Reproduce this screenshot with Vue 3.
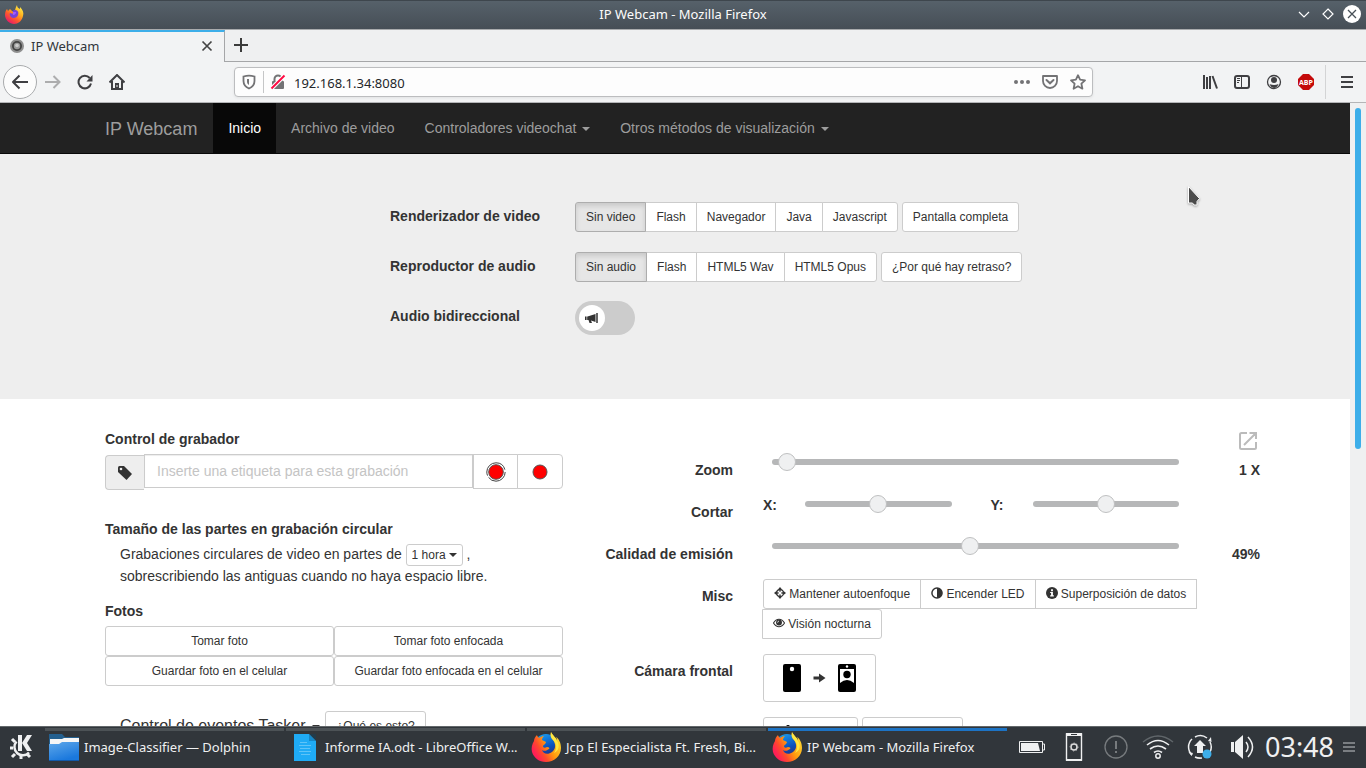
<script setup>
import { ref } from 'vue'

const address = ref('192.168.1.34:8080')
const tag = ref('')
const part = ref('1 hora')
const twoWay = ref(false)
const zoom = ref(15)
const cropX = ref(50)
const cropY = ref(50)
const quality = ref(49)

const video = ['Sin video', 'Flash', 'Navegador', 'Java', 'Javascript']
const audio = ['Sin audio', 'Flash', 'HTML5 Wav', 'HTML5 Opus']
const photos = ['Tomar foto', 'Tomar foto enfocada', 'Guardar foto en el celular', 'Guardar foto enfocada en el celular']
const tasks = [
  { icon: 'folder', title: 'Image-Classifier — Dolphin' },
  { icon: 'doc', title: 'Informe IA.odt - LibreOffice W...' },
  { icon: 'fox', title: 'Jcp El Especialista Ft. Fresh, Bi...' },
  { icon: 'fox', title: 'IP Webcam - Mozilla Firefox', active: true },
]
</script>

<template>
  <div class="desktop">
    <svg class="defs" width="0" height="0" aria-hidden="true">
      <defs>
        <linearGradient id="fxBody" x1="0.85" y1="0.05" x2="0.2" y2="0.95">
          <stop offset="0" stop-color="#fff14d" /><stop offset="0.35" stop-color="#ffb01f" /><stop offset="0.65" stop-color="#ff5a2c" /><stop offset="1" stop-color="#e8156d" />
        </linearGradient>
        <linearGradient id="fxOld" x1="0.9" y1="0.2" x2="0.1" y2="0.7">
          <stop offset="0" stop-color="#ffd52e" /><stop offset="0.45" stop-color="#ff9a0e" /><stop offset="0.75" stop-color="#ff4a2c" /><stop offset="1" stop-color="#ff1f56" />
        </linearGradient>
        <linearGradient id="fxGlobe" x1="0.2" y1="0" x2="0.6" y2="1">
          <stop offset="0" stop-color="#1aa0f2" /><stop offset="0.6" stop-color="#0b50bd" /><stop offset="1" stop-color="#2b2b78" />
        </linearGradient>
        <linearGradient id="folderBlue" x1="0" y1="0" x2="0.5" y2="1">
          <stop offset="0" stop-color="#5fa8ea" /><stop offset="1" stop-color="#1a78dd" />
        </linearGradient>
        <symbol id="folder" viewBox="0 0 32 32">
          <path d="M1 3h13l3 3h14v8H1z" fill="#24608f" />
          <path d="M2 8h12l2-1h15v9H2z" fill="#f6f6f6" />
          <path d="M1 13h10l3-2h17v18H1z" fill="url(#folderBlue)" />
          <path d="M1 29h30v1H1z" fill="#1259a9" />
        </symbol>
        <symbol id="doc" viewBox="0 0 32 32">
          <path d="M5 3h15l7 7v20H5z" fill="#1fabf5" />
          <path d="M20 3l7 7v-7z" fill="#233b4a" /><path d="M20 3v7h7z" fill="#1587c7" />
          <path d="M11 11.500h7M10 14.500h12M11 17.500h10M10 20.500h12M12 23.500h9" stroke="#5fc4f8" />
        </symbol>
        <symbol id="fox" viewBox="0 0 32 32">
          <circle cx="16" cy="15" r="12" fill="url(#fxGlobe)" />
          <path d="M21 1c-1 4 0 6 2 8 3 4 3 9-1 12-4 3-9 2-10-2 3 2 5 0 7-1 1-1 0-2-2-2-2 1-4 1-4-1 0-1 3-2 3-4-1-1-3-1-4-2 0-2 1-3 2-4-2 0-4 1-5 2-1-1-2-2-2-3-2 2-3 4-3 6-2 3-3 7-2 11 2 6 7 10 14 10 8 0 15-6 15-14 0-5-2-9-5-11 1 2 1 3 1 4-1-4-5-6-6-9z" fill="url(#fxOld)" />
          <path d="M21 1c-1 4 0 6 2 8 4 4 4 9 1 13 5-2 6-8 3-12-1-4-5-6-6-9z" fill="#fff04a" opacity=".8" />
        </symbol>
      </defs>
    </svg>

    <header class="titlebar">
      <svg class="app-icon" width="20" height="20" viewBox="0 0 20 20">
        <path d="M13 1c0 2 1 3 3 4 0-1 0-1 0-2 3 3 4 6 3 9-1 5-5 8-9 8s-9-4-9-9c0-3 1-5 2-6l1 2 2-2 2 2h3c0-2 1-4 2-6z" fill="url(#fxBody)" />
        <path d="M10 6c4 0 5 2 4 5-1 3-5 4-7 2-1-1-2-3-1-4l4 1 1-2H8z" fill="#7641d9" />
        <path d="M9 8h3c0 2-1 3-3 3z" fill="#a35cff" />
      </svg>
      <span>IP Webcam - Mozilla Firefox</span>
      <div class="win-buttons">
        <button aria-label="Minimizar"><svg width="20" height="20" viewBox="0 0 20 20"><path d="M5 8l5 5 5-5" fill="none" stroke="#fff" stroke-width="1.200" /></svg></button>
        <button aria-label="Maximizar"><svg width="20" height="20" viewBox="0 0 20 20"><path d="M10 5l5 5-5 5-5-5z" fill="none" stroke="#fff" stroke-width="1.200" /></svg></button>
        <button aria-label="Cerrar"><svg width="20" height="20" viewBox="0 0 20 20"><circle cx="10" cy="10" r="9" fill="#fff" /><path d="M6 6l8 8M14 6l-8 8" stroke="#475057" stroke-width="1.300" /></svg></button>
      </div>
    </header>

    <div class="tabs">
      <div class="tab">
        <svg width="16" height="16" viewBox="0 0 16 16"><circle cx="8" cy="8" r="7" fill="#8f8f8f" /><circle cx="8" cy="8" r="5" fill="#444" /><circle cx="8" cy="8" r="3.200" fill="#999" /><circle cx="8" cy="7.500" r="1.800" fill="#ccc" /></svg>
        <span>IP Webcam</span>
        <button aria-label="Cerrar pestaña"><svg width="16" height="16" viewBox="0 0 16 16"><path d="M3.500 3.500l9 9M12.500 3.500l-9 9" stroke="#444" stroke-width="1.700" /></svg></button>
      </div>
      <button class="newtab" aria-label="Nueva pestaña"><svg width="16" height="16" viewBox="0 0 16 16"><path d="M8 1v14M1 8h14" stroke="#3b3b3b" stroke-width="2" /></svg></button>
    </div>

    <div class="toolbar">
      <button class="back" aria-label="Atrás"><svg width="18" height="18" viewBox="0 0 18 18"><path d="M17 9H2M8.500 2.500L2 9l6.500 6.500" fill="none" stroke="#3f3f42" stroke-width="2" stroke-linejoin="round" /></svg></button>
      <button aria-label="Adelante"><svg width="16" height="16" viewBox="0 0 16 16"><path d="M0 8h14M8.500 2L14.500 8l-6 6" fill="none" stroke="#adadae" stroke-width="2" /></svg></button>
      <button aria-label="Recargar"><svg width="16" height="16" viewBox="0 0 16 16"><path d="M14 9.500a6.300 6.300 0 1 1-1.300-5.500" fill="none" stroke="#3f3f42" stroke-width="2" /><path d="M15.500 1v6.500H9.500z" fill="#3f3f42" /></svg></button>
      <button aria-label="Inicio"><svg width="16" height="16" viewBox="0 0 16 16"><path d="M0.500 8.500L8 1l7.500 7.500" fill="none" stroke="#3f3f42" stroke-width="2" /><path d="M3 7v8h10V7" fill="none" stroke="#3f3f42" stroke-width="2" /><path d="M6 9h4v5H6z" fill="#3f3f42" /><path d="M7.500 11h1v2h-1z" fill="#eee" /></svg></button>
      <div class="urlbar">
        <button aria-label="Protección"><svg width="16" height="16" viewBox="0 0 16 16"><path d="M2.500 2.500Q8 .8 13.500 2.500v4.500q0 5-5.500 7.500-5.500-2.500-5.500-7.500z" fill="none" stroke="#737375" stroke-width="1.800" /><path d="M8 5v6c-1.500-1-2-2-2-3.500V5z" fill="#737375" /></svg></button>
        <i class="line"></i>
        <button aria-label="Conexión no segura"><svg width="16" height="16" viewBox="0 0 16 16"><path d="M4.500 8V5a3.500 3.500 0 0 1 7 0v3" fill="none" stroke="#737375" stroke-width="2" /><rect x="2" y="7" width="12" height="8" rx="1" fill="#737375" /><path d="M1.500 14.500l13-13" stroke="#fff" stroke-width="4" /><path d="M1.500 14.500l13-13" stroke="#ff0b43" stroke-width="2" /></svg></button>
        <input v-model="address" aria-label="Dirección">
        <button aria-label="Acciones"><svg width="16" height="16" viewBox="0 0 16 16" fill="#737375"><circle cx="2" cy="8" r="2" /><circle cx="8" cy="8" r="2" /><circle cx="14" cy="8" r="2" /></svg></button>
        <button aria-label="Pocket"><svg width="16" height="16" viewBox="0 0 16 16"><path d="M1 2h14v5a7 7 0 0 1-14 0z" fill="none" stroke="#737375" stroke-width="1.800" stroke-linejoin="round" /><path d="M4.500 6L8 9.300 11.500 6" fill="none" stroke="#737375" stroke-width="2" stroke-linecap="round" /></svg></button>
        <button aria-label="Marcador"><svg width="16" height="16" viewBox="0 0 16 16"><path d="M8 1.200l2.100 4.500 4.900.6-3.600 3.400 1 5L8 12.200 3.600 14.700l1-5L1 6.300l4.900-.6z" fill="none" stroke="#737375" stroke-width="1.800" stroke-linejoin="round" /></svg></button>
      </div>
      <div class="tools">
        <button aria-label="Biblioteca"><svg width="16" height="16" viewBox="0 0 16 16"><path d="M2 1v14M5 3v12M8 2v13M10.500 2l4.500 12.500" stroke="#3f3f42" stroke-width="2" /></svg></button>
        <button aria-label="Barra lateral"><svg width="16" height="16" viewBox="0 0 16 16"><rect x="1" y="2" width="14" height="12" rx="2" fill="none" stroke="#3f3f42" stroke-width="2" /><path d="M7.500 2v12" stroke="#3f3f42" /><path d="M3 4.500h3M3 6.500h3M3 8.500h2" stroke="#3f3f42" /></svg></button>
        <button aria-label="Cuenta"><svg width="16" height="16" viewBox="0 0 16 16"><circle cx="8" cy="8" r="6.500" fill="none" stroke="#3f3f42" stroke-width="1.300" /><circle cx="8" cy="6" r="3" fill="#3f3f42" /><path d="M3.500 10q4.500 2 9 0-1.500 4-4.500 4t-4.500-4z" fill="#3f3f42" /></svg></button>
        <button aria-label="Adblock Plus"><svg width="18" height="18" viewBox="0 0 18 18"><path d="M6 1h6l5 5v6l-5 5H6l-5-5V6z" fill="#c40a0a" /><text x="9" y="12" text-anchor="middle" class="abp">ABP</text></svg></button>
      </div>
      <i class="tool-sep"></i>
      <button aria-label="Menú"><svg width="16" height="16" viewBox="0 0 16 16"><path d="M2 3h12M2 8h12M2 13h12" stroke="#3f3f42" stroke-width="2" /></svg></button>
    </div>

    <div class="viewport">
      <main class="page">
        <nav class="navbar">
          <div class="container nav-inner">
            <a class="brand" href="#">IP Webcam</a>
            <a class="active" href="#">Inicio</a>
            <a href="#">Archivo de video</a>
            <a href="#">Controladores videochat <i class="caret"></i></a>
            <a href="#">Otros métodos de visualización <i class="caret"></i></a>
          </div>
        </nav>

        <section class="hero">
          <div class="container">
            <div class="hero-grid">
              <b id="lblVideo">Renderizador de video</b>
              <div class="buttons">
                <div class="group" role="group" aria-labelledby="lblVideo">
                  <button v-for="(v, i) in video" :key="v" class="btn" :class="{ pressed: i === 0 }">{{ v }}</button>
                </div>
                <button class="btn">Pantalla completa</button>
              </div>
              <b id="lblAudio">Reproductor de audio</b>
              <div class="buttons">
                <div class="group" role="group" aria-labelledby="lblAudio">
                  <button v-for="(v, i) in audio" :key="v" class="btn" :class="{ pressed: i === 0 }">{{ v }}</button>
                </div>
                <button class="btn">¿Por qué hay retraso?</button>
              </div>
              <label for="twoWay"><b>Audio bidireccional</b></label>
              <label class="switch">
                <input id="twoWay" v-model="twoWay" type="checkbox">
                <span class="knob"><svg width="14" height="14" viewBox="0 0 14 14"><path d="M0 5.500h2.500L10.500 3v8L6 9.500 7 12H4.500L3.500 9H0z" fill="#333" /><path d="M1.800 5v4" stroke="#fff" stroke-width=".6" /><path d="M12 2v10" stroke="#333" stroke-width="1.500" /></svg></span>
              </label>
            </div>
          </div>
        </section>

        <section class="container content">
          <div class="left">
            <label class="heading" for="tag">Control de grabador</label>
            <div class="input-group">
              <span class="addon"><svg width="16" height="16" viewBox="0 0 16 16"><path d="M1 2.500Q1 1 2.500 1H7l8 8-5.500 6L1 7z" fill="#333" /><circle cx="4" cy="4" r="1.300" fill="#eee" /></svg></span>
              <input id="tag" v-model="tag" placeholder="Inserte una etiqueta para esta grabación">
              <button class="rec" aria-label="Grabación circular"><svg width="20" height="20" viewBox="0 0 20 20"><circle cx="10" cy="10" r="9.200" fill="none" stroke="#444" stroke-dasharray="23 2 30 3" /><circle cx="10" cy="10" r="7.300" fill="red" stroke="#555" /></svg></button>
              <button class="rec" aria-label="Grabar"><svg width="20" height="20" viewBox="0 0 20 20"><circle cx="10" cy="10" r="7" fill="red" stroke="#555" /></svg></button>
            </div>
            <h4 class="heading size">Tamaño de las partes en grabación circular</h4>
            <p class="parts">
              <label for="part">Grabaciones circulares de video en partes de</label> <span class="select"><select id="part" v-model="part"><option>1 hora</option></select><i class="caret"></i></span>
              ,<br>sobrescribiendo las antiguas cuando no haya espacio libre.
            </p>
            <h4 class="heading">Fotos</h4>
            <div class="photos"><button v-for="p in photos" :key="p" class="btn">{{ p }}</button></div>
            <div class="tasker"><a href="#">Control de eventos Tasker <i class="caret"></i></a><button class="btn">¿Qué es esto?</button></div>
          </div>

          <div class="right">
            <a class="external" href="#" aria-label="Abrir en otra ventana"><svg width="20" height="20" viewBox="0 0 20 20"><path d="M9 2H3.500Q2 2 2 3.500v13Q2 18 3.500 18h13q1.500 0 1.500-1.500V11M11.500 2H18v6M6 14L17.500 2.500" fill="none" stroke="#bbb" stroke-width="2" /></svg></a>
            <label for="zoom">Zoom</label>
            <div class="slide"><input id="zoom" v-model="zoom" type="range" min="0" max="1000"></div>
            <output for="zoom">1 X</output>
            <b>Cortar</b>
            <div class="slide crop">
              <label for="cropX">X:</label><input id="cropX" v-model="cropX" type="range">
              <label for="cropY">Y:</label><input id="cropY" v-model="cropY" type="range">
            </div>
            <span></span>
            <label for="quality">Calidad de emisión</label>
            <div class="slide"><input id="quality" v-model="quality" type="range" min="1" max="100"></div>
            <output for="quality">{{ quality }}%</output>
            <b>Misc</b>
            <div class="misc">
              <button class="btn"><svg width="12" height="12" viewBox="0 0 13 13"><circle cx="6.500" cy="6.500" r="3.700" fill="none" stroke="#333" stroke-width="1.200" /><path d="M6.500 0L9 3H7.200v2.500H5.800V3H4zM6.500 13L9 10H7.200V7.500H5.800V10H4zM0 6.500L3 4v1.800h2.500v1.400H3V9zM13 6.500L10 4v1.800H7.500v1.400H10V9z" fill="#333" /><circle cx="6.500" cy="6.500" r="1.700" fill="#fff" /></svg> Mantener autoenfoque</button>
              <button class="btn"><svg width="12" height="12" viewBox="0 0 13 13"><circle cx="6.500" cy="6.500" r="5.500" fill="#fff" stroke="#333" stroke-width="1.600" /><path d="M6.500 1a5.500 5.500 0 0 1 0 11z" fill="#333" /></svg> Encender LED</button>
              <button class="btn"><svg width="12" height="12" viewBox="0 0 13 13"><circle cx="6.500" cy="6.500" r="6.500" fill="#333" /><path d="M5.500 2.500h2v2h-2zM4.500 5.500h3V9h1v1.200h-4V9h1V6.500h-1z" fill="#fff" /></svg> Superposición de datos</button>
              <button class="btn"><svg width="12" height="12" viewBox="0 0 13 13"><path d="M.5 6.500Q3 2.500 6.500 2.500t6 4Q10 10.500 6.500 10.500t-6-4z" fill="#fff" stroke="#333" stroke-width="1.200" /><circle cx="6.500" cy="6" r="3.200" fill="#333" /><path d="M5 6.200Q5 4.500 6.500 4.500" fill="none" stroke="#fff" stroke-width=".8" /></svg> Visión nocturna</button>
            </div>
            <span></span>
            <b>Cámara frontal</b>
            <div>
              <button class="btn camera" aria-label="Cambiar a cámara frontal">
                <svg width="20" height="28" viewBox="0 0 20 28"><rect x="1" y="0" width="18" height="28" rx="2" /><circle cx="10" cy="5" r="2.200" fill="#fff" /></svg>
                <svg width="13" height="12" viewBox="0 0 13 12"><path d="M.5 4.500H6V1.500L12.500 6 6 10.500v-3H.5z" fill="#333" /></svg>
                <svg width="20" height="28" viewBox="0 0 20 28"><rect x="1" y="0" width="18" height="28" rx="2" /><path d="M3 5h14v14q-7-6-14 0z" fill="#fff" /><circle cx="10" cy="10.500" r="3.700" /><circle cx="10" cy="2.500" r="1.200" fill="#fff" /></svg>
              </button>
            </div>
            <span></span>
            <b></b>
            <div class="more">
              <button class="btn" aria-label="Temporizador"><svg width="20" height="28" viewBox="0 0 20 28"><circle cx="10" cy="2" r="2" /><path d="M5 3h10v22H5z" /></svg></button>
              <button class="btn" aria-label="Más opciones"></button>
            </div>
          </div>
        </section>
      </main>
      <div class="scroll"><i></i></div>
      <svg class="cursor" width="14" height="22" viewBox="0 0 14 22"><path d="M1.500 1.500v16.500h4l1.500 2h3v-3.500l2.500-3z" fill="#4b4b4b" stroke="#fff" /></svg>
    </div>

    <footer class="taskbar">
      <button class="kicker" aria-label="Menú de aplicaciones"><svg width="26" height="26" viewBox="0 0 26 26">
        <path d="M8.500 7.500a8 8 0 1 0 12.500 11" fill="none" stroke="#eff0f1" stroke-width="2.500" />
        <path d="M5 14H2M7 20l-3 3M13 22v3M19 20l3 3M7 8L4 5" stroke="#eff0f1" stroke-width="3" />
        <path d="M10 1h4v16h-4zM19 1h5l-5 8 5 8h-5l-5-8z" fill="#eff0f1" />
      </svg></button>
      <div class="tasks">
        <button v-for="t in tasks" :key="t.title" class="task" :class="{ current: t.active }"><svg width="32" height="32"><use :href="'#' + t.icon" /></svg><span>{{ t.title }}</span></button>
      </div>
      <div class="tray">
        <button aria-label="Batería"><svg width="28" height="28" viewBox="0 0 28 28"><path d="M1.500 8.500h23v11h-23zM25 11h1.500v6h-2" fill="none" stroke="#eff0f1" /><path d="M3 10h17l2 8H3z" fill="#eff0f1" /></svg></button>
        <button aria-label="Teléfono"><svg width="28" height="28" viewBox="0 0 28 28"><path d="M6.500 1h15v26h-15z" fill="none" stroke="#eff0f1" stroke-width="1.400" /><path d="M6 0h16v3H6zM6 26h16v2H6z" fill="#eff0f1" /><path d="M11 1.500h6" stroke="#31363b" /><circle cx="14" cy="14" r="3" fill="none" stroke="#ddd" stroke-width="1.500" /><circle cx="14" cy="14" r="4" fill="none" stroke="#ccc" stroke-dasharray="1 2" /></svg></button>
        <button aria-label="Notificaciones"><svg width="28" height="28" viewBox="0 0 28 28"><circle cx="14" cy="14" r="11" fill="none" stroke="#777b7e" stroke-width="1.300" /><path d="M14 8v8M14 18v2" stroke="#777b7e" stroke-width="2" /></svg></button>
        <button aria-label="Red inalámbrica"><svg width="32" height="28" viewBox="0 0 32 28" fill="none"><path d="M1 9Q16-3 31 9" stroke="#60666a" stroke-width="1.500" /><path d="M5 12q11-9 22 0M8 16q8-6 16 0M12 19.500q4-3 8 0" stroke="#eff0f1" stroke-width="1.600" /><circle cx="16" cy="23" r="2.200" stroke="#eff0f1" stroke-width="1.500" /></svg></button>
        <button aria-label="Actualizaciones"><svg width="28" height="28" viewBox="0 0 28 28"><path d="M6 22a11 11 0 0 1 0-16M9 4a11 11 0 0 1 12 1M24 9a11 11 0 0 1 0 10M9 24q3 1.500 7 1" fill="none" stroke="#eff0f1" stroke-width="1.500" /><path d="M14 7l6 6h-3v7h-6v-7H8zM22 8l3-4 .5 5zM2.500 19l3 4 1.500-3z" fill="#eff0f1" /><circle cx="21" cy="21" r="4.500" fill="#3daee9" /></svg></button>
        <button aria-label="Volumen"><svg width="28" height="28" viewBox="0 0 28 28"><path d="M3 9h3v10H3zM7 9l8-7v24l-8-7z" fill="#eff0f1" /><path d="M18 9q4 5 0 10M20 4q9 10 0 20" fill="none" stroke="#eff0f1" stroke-width="1.500" /></svg></button>
      </div>
      <time>03:48</time>
      <button class="panel-menu" aria-label="Opciones del panel"><svg width="12" height="12" viewBox="0 0 12 12"><path d="M0 2h12M0 6h12M0 10h12" stroke="#92979b" stroke-width="1.500" /></svg></button>
    </footer>
  </div>
</template>

<style>
body { margin: 0; background: #fff; }
</style>

<style scoped>
* { box-sizing: border-box; }
button, input, select { font: inherit; color: inherit; }
button { padding: 0; border: 0; background: none; cursor: pointer; }
svg { flex: none; }
.defs { position: absolute; }
.desktop { display: flex; flex-direction: column; height: 100vh; overflow: hidden; font: 13px/20px "Noto Sans", sans-serif; color: #31363b; }

.titlebar { position: relative; flex: none; display: flex; align-items: center; justify-content: center; height: 29px; padding-bottom: 2px; color: #fcfcfc; background: linear-gradient(#56616a, #464e56); border-top: 1px solid #3e464d; }
.app-icon { position: absolute; left: 4px; top: 3px; }
.win-buttons { position: absolute; right: 4px; top: 3px; display: flex; gap: 4px; }
.win-buttons button { display: flex; }

.tabs { flex: none; display: flex; height: 33px; background: #eff0f1; border-top: 1px solid #a9abad; }
.tab { display: flex; align-items: center; gap: 6px; width: 225px; padding: 0 9px 2px; border-top: 2px solid #3daee9; border-right: 1px solid #a5a6a8; background: #f2f3f4; }
.tab span { flex: 1; }
.tab button { display: flex; }
.newtab { flex: 1; display: flex; align-items: center; padding: 0 0 2px 8px; border-bottom: 1px solid #a5a6a8; }

.toolbar { flex: none; display: flex; align-items: center; height: 41px; padding: 0 3px; background: #f2f3f4; border-bottom: 1px solid #b4b5b7; }
.toolbar button { display: flex; align-items: center; justify-content: center; width: 32px; height: 32px; }
.toolbar .back { width: 34px; height: 34px; border: 1px solid #a9abad; border-radius: 50%; background: #fcfcfc; }
.urlbar { flex: 1; display: flex; align-items: center; height: 30px; margin: 0 101px; border: 1px solid #bcbdbf; border-radius: 4px; background: #fdfdfd; box-shadow: 0 1px 3px #0001; }
.urlbar button { width: 28px; height: 28px; }
.urlbar .line { width: 1px; height: 22px; background: #c5c6c7; }
.urlbar input { flex: 1; min-width: 0; padding: 2px 2px 0; border: 0; outline: 0; background: none; color: #232629; }
.tools { display: flex; }
.abp { font: bold 7px "Open Sans", sans-serif; fill: #fff; }
.tool-sep { width: 1px; height: 34px; margin: 0 5px 0 3px; background: #d3d4d5; }

.viewport { position: relative; flex: 1; display: flex; min-height: 0; font: 14px/20px "Liberation Sans", Arial, sans-serif; color: #333; }
.page { flex: 1; min-width: 0; overflow: hidden; background: #fff; }
.scroll { width: 16px; padding: 5px; background: #eff0f1; }
.scroll i { display: block; width: 6px; height: 341px; border-radius: 3px; background: #3daee9; }
.cursor { position: absolute; left: 1187px; top: 82px; filter: drop-shadow(0 1px 1px #0005); }
.container { max-width: 1170px; margin: 0 auto; padding: 0 0 0 15px; }
.navbar { background: #222; border-bottom: 1px solid #080808; }
.nav-inner { display: flex; }
.navbar a { padding: 15px; color: #9d9d9d; text-decoration: none; }
.navbar .brand { padding: 16px 16px 14px 0; font-size: 18px; }
.navbar .active { color: #fff; background: #080808; }
.caret { display: inline-block; margin-left: 2px; vertical-align: middle; border: 4px solid transparent; border-top-color: currentColor; border-bottom: 0; }

.hero { padding: 48px 0 64px; background: #eee; }
.hero-grid { display: grid; grid-template-columns: 185px 1fr; row-gap: 20px; margin-left: 285px; }
.hero-grid > b, .hero-grid > label:not(.switch) { padding-top: 4px; }
.buttons { display: flex; gap: 4px; }
.group { display: flex; }
.btn { height: 30px; padding: 0 10px; border: 1px solid #ccc; border-radius: 3px; background: #fff; font-size: 12px; font-weight: normal; line-height: 18px; white-space: nowrap; color: #333; }
.group .btn + .btn { margin-left: -1px; }
.group .btn:not(:first-child) { border-top-left-radius: 0; border-bottom-left-radius: 0; }
.group .btn:not(:last-child) { border-top-right-radius: 0; border-bottom-right-radius: 0; }
.btn.pressed { position: relative; background: #e6e6e6; border-color: #adadad; box-shadow: inset 0 3px 5px #00000020; }
.switch { display: block; position: relative; width: 60px; height: 34px; margin-top: -1px; border-radius: 17px; background: #ccc; }
.switch input { position: absolute; opacity: 0; }
.knob { position: absolute; left: 4px; top: 4px; display: flex; align-items: center; justify-content: center; width: 26px; height: 26px; border-radius: 50%; background: #fff; }

.content { display: grid; grid-template-columns: 458fr 697fr; padding-top: 30px; }
.heading { display: block; margin: 0 0 5px; font-size: 14px; font-weight: bold; }
.input-group { display: flex; align-items: flex-start; }
.addon { display: flex; align-items: center; justify-content: center; width: 39px; height: 35px; margin-top: 1px; border: 1px solid #ccc; border-right: 0; border-radius: 4px 0 0 4px; background: #eee; }
.input-group input { flex: 1; min-width: 0; height: 34px; padding: 6px 12px; border: 1px solid #ccc; border-radius: 0; box-shadow: inset 0 1px 1px #00000013; }
.input-group input::placeholder { color: #c4c4c4; }
.rec { display: flex; align-items: center; justify-content: center; width: 45px; height: 35px; border: 1px solid #ccc; background: #fff; }
.rec + .rec { width: 46px; margin-left: -1px; border-radius: 0 4px 4px 0; }
.size { margin: 29px 0 4px; }
.parts { margin: 0 0 14px; padding-left: 15px; line-height: 22px; }
.select { position: relative; display: inline-flex; align-items: center; height: 22px; margin: 1px 0 -1px; vertical-align: top; }
.select select { appearance: none; width: 57px; height: 22px; padding: 0 5px; border: 1px solid #ccc; border-radius: 3px; background: #fff; font-size: 12px; line-height: 18px; }
.select .caret { position: absolute; right: 6px; pointer-events: none; }
.photos { display: grid; grid-template-columns: 1fr 1fr; }
.tasker { display: flex; gap: 5px; margin-top: 25px; padding-left: 15px; font-size: 16px; line-height: 30px; }
.tasker a { color: #333; text-decoration: none; }

.right { position: relative; display: grid; grid-template-columns: 170px 1fr 60px; grid-template-rows: 42px 42px 42px auto auto auto; align-items: start; padding-top: 24px; font-weight: bold; }
.right > label, .right > b { padding-top: 7px; text-align: right; }
.right > div { margin-left: 30px; }
.right > output { padding-top: 7px; text-align: right; }
.external { position: absolute; right: 2px; top: 2px; }
.external svg { display: block; }
.slide { display: flex; padding: 0 21px 0 9px; }
.crop { padding-left: 0; }
.crop label { width: 42px; }
.crop input + label { width: 81px; padding-left: 39px; }
.slide input { appearance: none; flex: 1; min-width: 0; height: 18px; margin: 0; background: none; }
.slide input::-webkit-slider-runnable-track { height: 6px; border-radius: 3px; background: #b6b7b8; }
.slide input::-webkit-slider-thumb { appearance: none; width: 18px; height: 18px; margin-top: -6px; border: 1px solid #bfc0c1; border-radius: 50%; background: #eff0f1; }
.misc { display: flex; flex-wrap: wrap; margin-bottom: 15px; }
.misc .btn { margin-left: -1px; border-radius: 0; }
.misc .btn:first-child { margin-left: 0; border-radius: 3px 0 0 3px; }
.misc .btn:last-child { border-radius: 0 3px 3px 0; }
.misc svg { vertical-align: -1px; }
.camera { display: flex; align-items: center; gap: 11px; width: 113px; height: 48px; justify-content: center; margin-bottom: 15px; }
.more { display: flex; gap: 4px; }
.more .btn { display: flex; justify-content: flex-start; width: 95px; height: 48px; padding: 7px 14px; }
.more .btn + .btn { width: 101px; }

.taskbar { flex: none; display: flex; align-items: stretch; height: 42px; border-top: 1px solid #63686b; background: #31363b; color: #eff0f1; }
.taskbar button { display: flex; align-items: center; justify-content: center; padding-bottom: 2px; }
.taskbar .kicker { width: 45px; padding-right: 3px; }
.tasks { flex: 1; display: grid; grid-template-columns: repeat(4, 1fr); gap: 2px; padding: 1px 4px 0 0; }
.taskbar .task { justify-content: flex-start; gap: 4px; min-width: 0; padding: 0 3px 6px; border-top: 3px solid #4c5256; white-space: nowrap; overflow: hidden; }
.taskbar .task.current { border-color: #1d73c4; }
.tray { display: flex; }
.tray button { width: 42px; }
time { width: 73px; padding-left: 2px; font-size: 27px; line-height: 40px; }
.panel-menu { width: 26px; margin-right: 4px; }
</style>
